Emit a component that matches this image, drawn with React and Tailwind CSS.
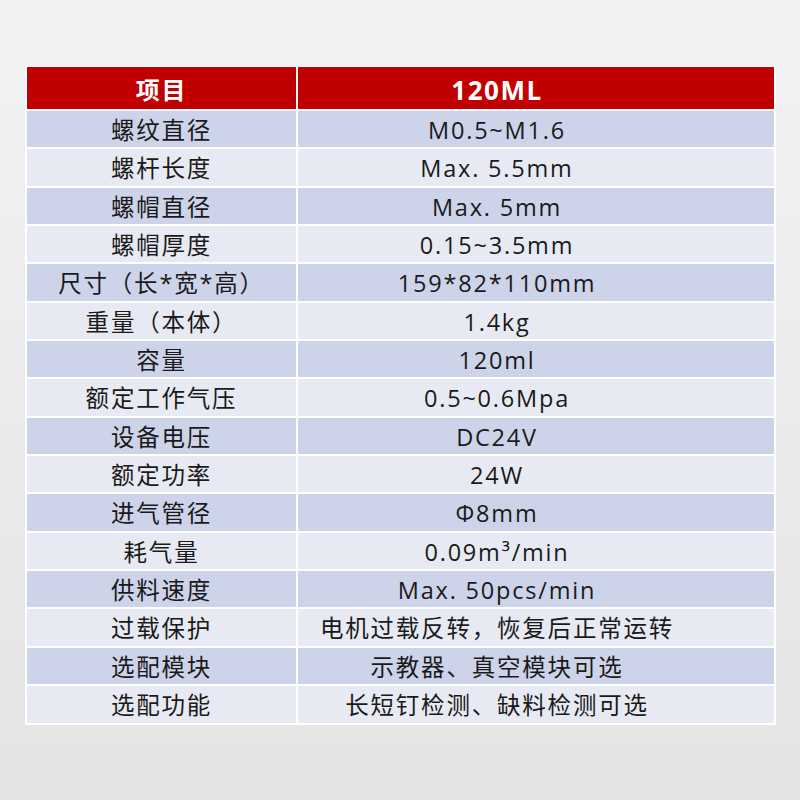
const rows = [
  ["螺纹直径", "M0.5~M1.6"],
  ["螺杆长度", "Max. 5.5mm"],
  ["螺帽直径", "Max. 5mm"],
  ["螺帽厚度", "0.15~3.5mm"],
  ["尺寸（长*宽*高）", "159*82*110mm"],
  ["重量（本体）", "1.4kg"],
  ["容量", "120ml"],
  ["额定工作气压", "0.5~0.6Mpa"],
  ["设备电压", "DC24V"],
  ["额定功率", "24W"],
  ["进气管径", "Φ8mm"],
  ["耗气量", "0.09m³/min"],
  ["供料速度", "Max. 50pcs/min"],
  ["过载保护", "电机过载反转，恢复后正常运转"],
  ["选配模块", "示教器、真空模块可选"],
  ["选配功能", "长短钉检测、缺料检测可选"],
];

export default function App() {
  return (
    <div
      className="w-[800px] h-[800px] bg-gradient-to-b from-[#f3f3f6] to-[#e4e4e4] pt-[66px] pl-[25px]"
      style={{ fontFamily: '"Open Sans", "Noto Sans CJK SC", sans-serif' }}
    >
      <div className="w-[751px] bg-white p-[2px] pt-[1px]">
        <div className="grid grid-cols-[269px_476px] gap-x-[2px] gap-y-[2px] text-[#1a1a1a] text-[23.5px] tracking-[1.8px]">
          {/* Header */}
          <div className="h-[42px] bg-[#c00000] flex items-center justify-center pt-[4px] text-white font-bold text-[24px] leading-none">
            项目
          </div>
          <div className="h-[42px] bg-[#c00000] flex items-center justify-center pt-[4px] pr-[78px] text-white font-bold text-[26px] tracking-[1.5px] leading-none">
            120ML
          </div>

          {rows.map(([k, v], i) => (
            <Row key={k} label={k} value={v} dark={i % 2 === 0} />
          ))}
        </div>
      </div>
    </div>
  );
}

function Row({ label, value, dark }) {
  const bg = dark ? "bg-[#cdd3e8]" : "bg-[#e8eaf3]";
  return (
    <>
      <div className={`h-[36.35px] ${bg} flex items-center justify-center pt-[3px] leading-none`}>
        {label}
      </div>
      <div className={`h-[36.35px] ${bg} flex items-center justify-center pt-[3px] pr-[78px] leading-none`}>
        {value}
      </div>
    </>
  );
}
